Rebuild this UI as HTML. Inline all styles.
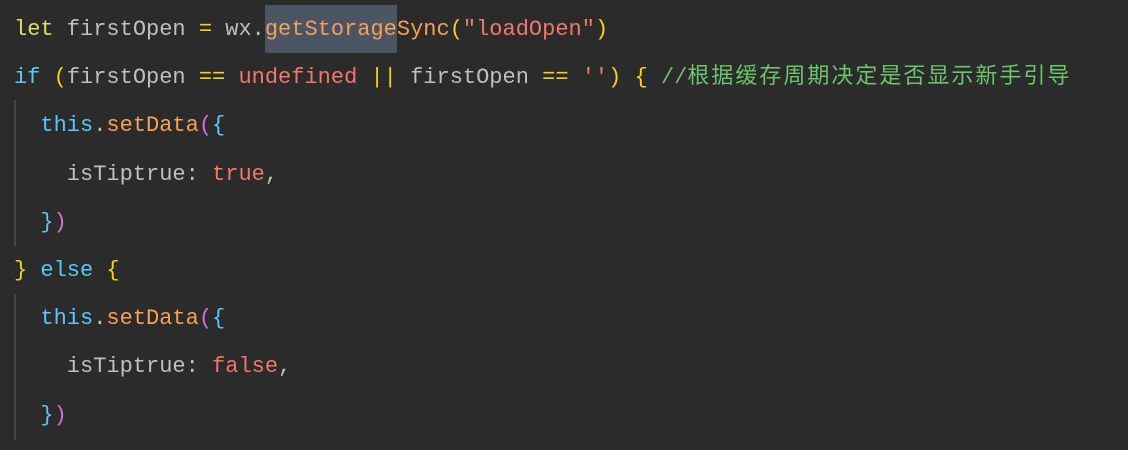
<!DOCTYPE html>
<html><head><meta charset="utf-8"><style>
html,body{margin:0;padding:0;background:#2b2b2b;width:1128px;height:450px;overflow:hidden}
.code{position:absolute;left:14px;top:6px;font-family:"Liberation Mono","Noto Sans CJK SC",monospace;font-size:22px;line-height:48.2px;color:#bfbfbf;white-space:pre}
.kw{color:#dede6a}.bl{color:#5cc6f5}.or{color:#f5a05a}.rd{color:#f0786a}.yl{color:#f5d020}.pk{color:#d670d6}.gr{color:#6cc46c}
.cj{letter-spacing:2px}
.hl{background:#4b5462;padding:12px 0 11px}
.guide{position:absolute;left:14px;width:2px;background:#444}
</style></head><body>
<div class="guide" style="top:100px;height:146px"></div>
<div class="guide" style="top:294px;height:146px"></div>
<div class="code"><span class="kw">let</span> firstOpen <span class="yl">=</span> wx.<span class="or"><span class="hl">getStorage</span>Sync</span><span class="yl">(</span><span class="rd">"loadOpen"</span><span class="yl">)</span>
<span class="bl">if</span> <span class="yl">(</span>firstOpen <span class="yl">==</span> <span class="rd">undefined</span> <span class="yl">||</span> firstOpen <span class="yl">==</span> <span class="rd">''</span><span class="yl">)</span> <span class="yl">{</span> <span class="gr">//<span class="cj">根据缓存周期决定是否显示新手引导</span></span>
  <span class="bl">this</span>.<span class="or">setData</span><span class="pk">(</span><span class="bl">{</span>
    isTiptrue: <span class="rd">true</span>,
  <span class="bl">}</span><span class="pk">)</span>
<span class="yl">}</span> <span class="bl">else</span> <span class="yl">{</span>
  <span class="bl">this</span>.<span class="or">setData</span><span class="pk">(</span><span class="bl">{</span>
    isTiptrue: <span class="rd">false</span>,
  <span class="bl">}</span><span class="pk">)</span></div>
</body></html>
